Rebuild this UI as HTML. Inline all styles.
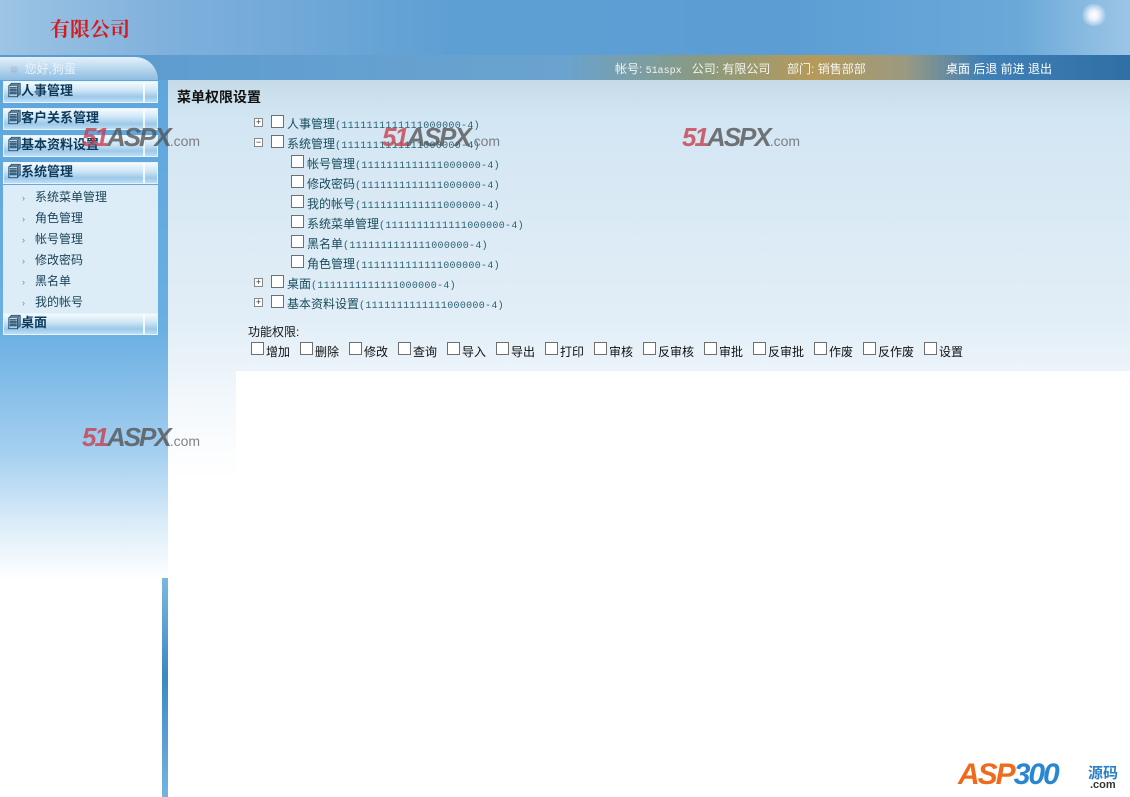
<!DOCTYPE html>
<html><head><meta charset="utf-8"><style>
*{margin:0;padding:0;box-sizing:border-box}
body{width:1130px;height:797px;position:relative;overflow:hidden;background:#fff;font-family:"Liberation Sans","Noto Sans CJK SC",sans-serif;font-size:12px}
.a{position:absolute;white-space:nowrap}
#hdr{left:0;top:0;width:1130px;height:55px;background:linear-gradient(90deg,#9cc4e4 0%,#7fb0dc 15%,#5e9fd3 40%,#5c9ed4 70%,#6aa8d8 90%,#9cc6e6 100%)}
#nav{left:0;top:55px;width:1130px;height:25px;background:linear-gradient(90deg,#5a9ad0 0%,#6aa3cf 50%,#8a9a80 62%,#b59a5a 72%,#9a9a80 80%,#3f80b6 87%,#2f6fa6 100%)}
#side{left:0;top:80px;width:168px;height:500px;background:linear-gradient(180deg,#5fa6dd 0%,#6aafe2 50%,#a6d0f0 75%,#d8ebf8 88%,#fff 100%)}
#cont{left:168px;top:80px;width:962px;height:400px;background:linear-gradient(180deg,#c6dbe8 0%,#d3e6f3 10%,#e2eef7 60%,#f6fafd 85%,#fff 100%)}
.mh{position:absolute;left:3px;width:155px;height:22px;background:linear-gradient(180deg,#f4fbff 0%,#cfe6f6 40%,#9cc9ea 75%,#c0def3 100%);border:1px solid #e6f3fb;font-weight:bold;font-size:13px;line-height:18px;color:#0d3a5a;padding:0 0 0 4px}
.mh:after{content:"";position:absolute;right:12px;top:1px;width:2px;height:19px;background:#fff;opacity:.8}
.sub{position:absolute;left:3px;top:185px;width:155px;height:128px;background:#ddedf8}
.si{position:absolute;left:22px;font-size:12px;color:#1b4358}
.si b{font-weight:normal;color:#6a8a9a;font-size:9px;margin-right:10px}
.t{color:#174c5c;font-size:12px}
.c{font-family:"Liberation Mono",monospace;font-size:10px;color:#2b6274;letter-spacing:.3px}
.cb{position:absolute;width:13px;height:13px;border:1px solid #6f6f6f;background:#fff}
.pm{position:absolute;width:9px;height:9px;border:1px solid #888;background:#fff;font-size:9px;line-height:7px;text-align:center;color:#333}
.f{position:absolute;top:343px;font-size:12px;color:#111}
.wm{position:absolute;font-weight:bold;font-style:italic;font-size:26px;color:#c8404e;opacity:.8;letter-spacing:-2px}
.wm span{color:#555}
.wm i{font-style:normal;font-size:14px;color:#666;font-weight:normal;letter-spacing:0}
</style></head><body>
<div class="a" id="hdr"></div>
<div class="a" style="left:1080px;top:4px;width:28px;height:22px;border-radius:50%;background:radial-gradient(circle,#fff 0%,#eef3fb 25%,rgba(200,220,245,0) 70%)"></div>
<div class="a" style="left:50px;top:13px;font-size:20px;font-weight:bold;color:#d41c1c;font-family:'Liberation Serif','Noto Serif CJK SC',serif">有限公司</div>
<div class="a" id="nav"></div>
<div class="a" style="left:0;top:57px;width:158px;height:23px;background:linear-gradient(180deg,#e4f1fa,#8dbde2);border-radius:0 30px 0 0"></div>
<div class="a" style="left:10px;top:60px;color:#e8f2fb;font-size:12px"><span style="font-size:8px;color:#9ab">▦</span>&nbsp;&nbsp;您好,狗蛋</div>
<div class="a" style="left:615px;top:60px;color:#f4f4ee;font-size:12px">帐号: <span style="font-family:'Liberation Mono';font-size:10px">51aspx</span>&nbsp;&nbsp; 公司: 有限公司&nbsp;&nbsp;&nbsp;&nbsp; 部门: 销售部部</div>
<div class="a" style="left:946px;top:60px;color:#fff;font-size:12px">桌面 后退 前进 退出</div>
<div class="a" id="side"></div>
<div class="a" style="left:162px;top:578px;width:6px;height:219px;background:linear-gradient(180deg,#7bb8e0,#3d88bf 45%,#74b4e0)"></div>
<div class="a" id="cont"></div>
<div class="a" style="left:236px;top:371px;width:894px;height:426px;background:#fff"></div>
<div class="mh" style="top:81px">🗐人事管理</div>
<div class="mh" style="top:108px">🗐客户关系管理</div>
<div class="mh" style="top:135px">🗐基本资料设置</div>
<div class="mh" style="top:162px">🗐系统管理</div>
<div class="sub"></div>
<div class="si" style="top:188px"><b>›</b>系统菜单管理</div>
<div class="si" style="top:209px"><b>›</b>角色管理</div>
<div class="si" style="top:230px"><b>›</b>帐号管理</div>
<div class="si" style="top:251px"><b>›</b>修改密码</div>
<div class="si" style="top:272px"><b>›</b>黑名单</div>
<div class="si" style="top:293px"><b>›</b>我的帐号</div>
<div class="mh" style="top:313px">🗐桌面</div>
<div class="a" style="left:177px;top:87px;font-size:14px;font-weight:bold;color:#111">菜单权限设置</div>

<div class="pm" style="left:254px;top:118px">+</div><div class="cb" style="left:271px;top:115px"></div><div class="a" style="left:287px;top:115px"><span class="t">人事管理</span><span class="c">(1111111111111000000-4)</span></div>
<div class="pm" style="left:254px;top:138px">−</div><div class="cb" style="left:271px;top:135px"></div><div class="a" style="left:287px;top:135px"><span class="t">系统管理</span><span class="c">(1111111111111000000-4)</span></div>
<div class="cb" style="left:291px;top:155px"></div><div class="a" style="left:307px;top:155px"><span class="t">帐号管理</span><span class="c">(1111111111111000000-4)</span></div>
<div class="cb" style="left:291px;top:175px"></div><div class="a" style="left:307px;top:175px"><span class="t">修改密码</span><span class="c">(1111111111111000000-4)</span></div>
<div class="cb" style="left:291px;top:195px"></div><div class="a" style="left:307px;top:195px"><span class="t">我的帐号</span><span class="c">(1111111111111000000-4)</span></div>
<div class="cb" style="left:291px;top:215px"></div><div class="a" style="left:307px;top:215px"><span class="t">系统菜单管理</span><span class="c">(1111111111111000000-4)</span></div>
<div class="cb" style="left:291px;top:235px"></div><div class="a" style="left:307px;top:235px"><span class="t">黑名单</span><span class="c">(1111111111111000000-4)</span></div>
<div class="cb" style="left:291px;top:255px"></div><div class="a" style="left:307px;top:255px"><span class="t">角色管理</span><span class="c">(1111111111111000000-4)</span></div>
<div class="pm" style="left:254px;top:278px">+</div><div class="cb" style="left:271px;top:275px"></div><div class="a" style="left:287px;top:275px"><span class="t">桌面</span><span class="c">(1111111111111000000-4)</span></div>
<div class="pm" style="left:254px;top:298px">+</div><div class="cb" style="left:271px;top:295px"></div><div class="a" style="left:287px;top:295px"><span class="t">基本资料设置</span><span class="c">(1111111111111000000-4)</span></div>

<div class="a" style="left:248px;top:323px;color:#111">功能权限:</div>
<div class="cb" style="left:251px;top:342px"></div><div class="f" style="left:266px">增加</div>
<div class="cb" style="left:300px;top:342px"></div><div class="f" style="left:315px">删除</div>
<div class="cb" style="left:349px;top:342px"></div><div class="f" style="left:364px">修改</div>
<div class="cb" style="left:398px;top:342px"></div><div class="f" style="left:413px">查询</div>
<div class="cb" style="left:447px;top:342px"></div><div class="f" style="left:462px">导入</div>
<div class="cb" style="left:496px;top:342px"></div><div class="f" style="left:511px">导出</div>
<div class="cb" style="left:545px;top:342px"></div><div class="f" style="left:560px">打印</div>
<div class="cb" style="left:594px;top:342px"></div><div class="f" style="left:609px">审核</div>
<div class="cb" style="left:643px;top:342px"></div><div class="f" style="left:658px">反审核</div>
<div class="cb" style="left:704px;top:342px"></div><div class="f" style="left:719px">审批</div>
<div class="cb" style="left:753px;top:342px"></div><div class="f" style="left:768px">反审批</div>
<div class="cb" style="left:814px;top:342px"></div><div class="f" style="left:829px">作废</div>
<div class="cb" style="left:863px;top:342px"></div><div class="f" style="left:878px">反作废</div>
<div class="cb" style="left:924px;top:342px"></div><div class="f" style="left:939px">设置</div>

<div class="wm" style="left:82px;top:122px">51<span>ASPX</span><i>.com</i></div>
<div class="wm" style="left:382px;top:122px">51<span>ASPX</span><i>.com</i></div>
<div class="wm" style="left:682px;top:122px">51<span>ASPX</span><i>.com</i></div>
<div class="wm" style="left:82px;top:422px">51<span>ASPX</span><i>.com</i></div>

<div class="a" style="left:958px;top:758px;font-size:30px;font-weight:bold;font-style:italic;color:#f06a1e;letter-spacing:-2px">ASP<span style="color:#2a86d0">300</span></div>
<div class="a" style="left:1088px;top:762px;font-size:15px;font-weight:bold;color:#2a7fc8">源码</div>
<div class="a" style="left:1090px;top:779px;font-size:11px;font-weight:bold;color:#333">.com</div>
</body></html>
